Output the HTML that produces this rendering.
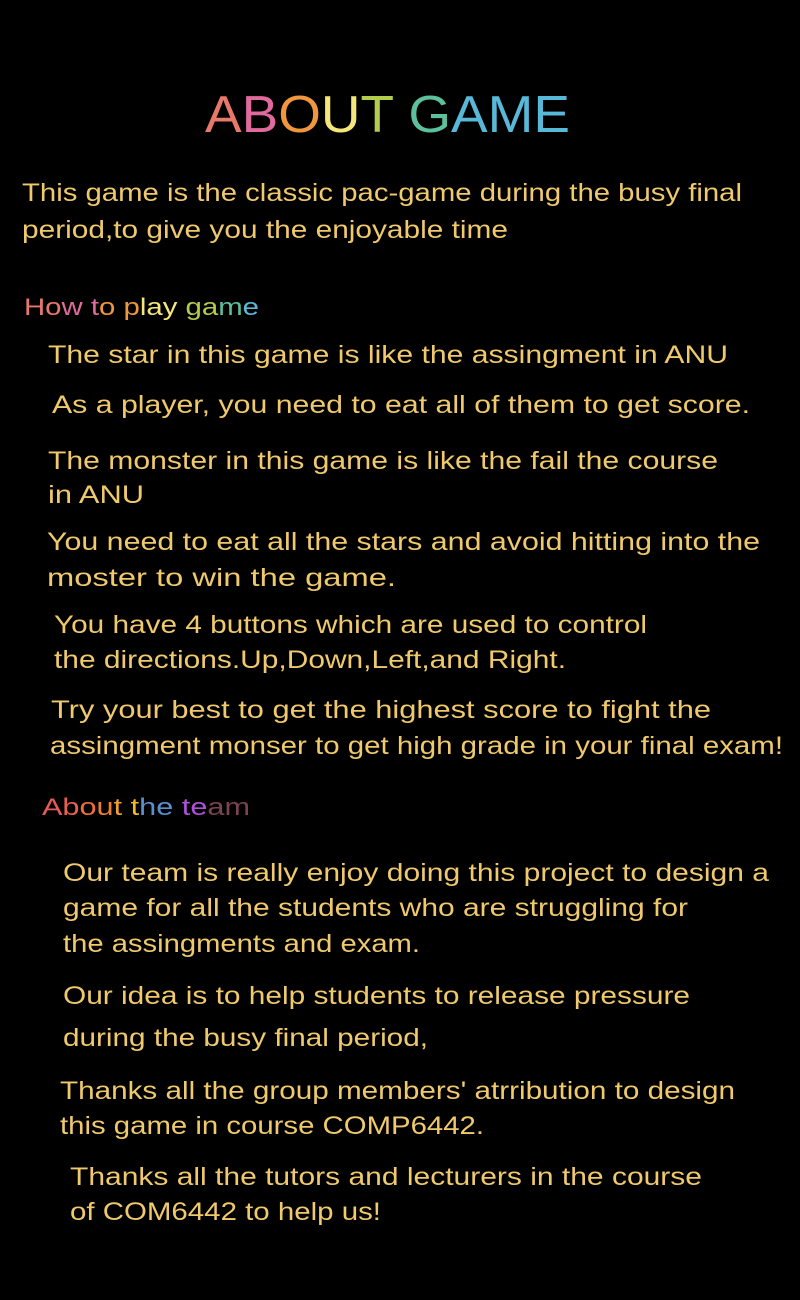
<!DOCTYPE html>
<html><head><meta charset="utf-8"><style>
html,body{margin:0;padding:0;background:#000;width:800px;height:1300px;overflow:hidden}
svg{display:block}
text{font-family:"Liberation Sans Narrow","Liberation Sans",sans-serif;}
.b{fill:#efc96c;font-size:25px}
</style></head><body>
<svg width="800" height="1300" xmlns="http://www.w3.org/2000/svg">
<rect width="800" height="1300" fill="#000"/>
<text x="205" y="132" font-size="52" textLength="365" lengthAdjust="spacingAndGlyphs"><tspan fill="#e8786c">A</tspan><tspan fill="#e06a9c">B</tspan><tspan fill="#f0963c">O</tspan><tspan fill="#f4e67a">U</tspan><tspan fill="#b4cc4c">T</tspan><tspan fill="#000"> </tspan><tspan fill="#5cc09c">G</tspan><tspan fill="#58b8d8">A</tspan><tspan fill="#58b8d8">M</tspan><tspan fill="#58b8d8">E</tspan></text>
<g class="b">
<text class="b" x="22" y="201" textLength="720" lengthAdjust="spacingAndGlyphs">This game is the classic pac-game during the busy final</text>
<text class="b" x="22" y="238" textLength="486" lengthAdjust="spacingAndGlyphs">period,to give you the enjoyable time</text>
<text class="b" x="48" y="363" textLength="680" lengthAdjust="spacingAndGlyphs">The star in this game is like the assingment in ANU</text>
<text class="b" x="52" y="413" textLength="698" lengthAdjust="spacingAndGlyphs">As a player, you need to eat all of them to get score.</text>
<text class="b" x="48" y="469" textLength="670" lengthAdjust="spacingAndGlyphs">The monster in this game is like the fail the course</text>
<text class="b" x="48" y="503" textLength="96" lengthAdjust="spacingAndGlyphs">in ANU</text>
<text class="b" x="47" y="550" textLength="713" lengthAdjust="spacingAndGlyphs">You need to eat all the stars and avoid hitting into the</text>
<text class="b" x="47" y="586" textLength="349" lengthAdjust="spacingAndGlyphs">moster to win the game.</text>
<text class="b" x="54" y="633" textLength="593" lengthAdjust="spacingAndGlyphs">You have 4 buttons which are used to control</text>
<text class="b" x="54" y="668" textLength="512" lengthAdjust="spacingAndGlyphs">the directions.Up,Down,Left,and Right.</text>
<text class="b" x="51" y="718" textLength="660" lengthAdjust="spacingAndGlyphs">Try your best to get the highest score to fight the</text>
<text class="b" x="50" y="754" textLength="733" lengthAdjust="spacingAndGlyphs">assingment monser to get high grade in your final exam!</text>
<text class="b" x="63" y="881" textLength="706" lengthAdjust="spacingAndGlyphs">Our team is really enjoy doing this project to design a</text>
<text class="b" x="63" y="916" textLength="625" lengthAdjust="spacingAndGlyphs">game for all the students who are struggling for</text>
<text class="b" x="63" y="952" textLength="357" lengthAdjust="spacingAndGlyphs">the assingments and exam.</text>
<text class="b" x="63" y="1004" textLength="627" lengthAdjust="spacingAndGlyphs">Our idea is to help students to release pressure</text>
<text class="b" x="63" y="1046" textLength="365" lengthAdjust="spacingAndGlyphs">during the busy final period,</text>
<text class="b" x="60" y="1099" textLength="675" lengthAdjust="spacingAndGlyphs">Thanks all the group members' atrribution to design</text>
<text class="b" x="60" y="1134" textLength="424" lengthAdjust="spacingAndGlyphs">this game in course COMP6442.</text>
<text class="b" x="70" y="1185" textLength="632" lengthAdjust="spacingAndGlyphs">Thanks all the tutors and lecturers in the course</text>
<text class="b" x="70" y="1220" textLength="311" lengthAdjust="spacingAndGlyphs">of COM6442 to help us!</text>
</g>
<text x="24" y="315" font-size="24" textLength="235" lengthAdjust="spacingAndGlyphs"><tspan fill="#e8786c">H</tspan><tspan fill="#e8786c">o</tspan><tspan fill="#e06a9c">w</tspan><tspan fill="#000"> </tspan><tspan fill="#e06a9c">t</tspan><tspan fill="#f0963c">o</tspan><tspan fill="#000"> </tspan><tspan fill="#f0963c">p</tspan><tspan fill="#f4e67a">l</tspan><tspan fill="#f4e67a">a</tspan><tspan fill="#f4e67a">y</tspan><tspan fill="#000"> </tspan><tspan fill="#b4cc4c">g</tspan><tspan fill="#b4cc4c">a</tspan><tspan fill="#5cc09c">m</tspan><tspan fill="#58b8d8">e</tspan></text>
<text x="42" y="815" font-size="24" textLength="208" lengthAdjust="spacingAndGlyphs"><tspan fill="#e85a5a">A</tspan><tspan fill="#e86050">b</tspan><tspan fill="#ec7038">o</tspan><tspan fill="#ee7e2e">u</tspan><tspan fill="#f0a030">t</tspan><tspan fill="#000"> </tspan><tspan fill="#f4b82c">t</tspan><tspan fill="#5890d0">h</tspan><tspan fill="#5890d0">e</tspan><tspan fill="#000"> </tspan><tspan fill="#b050d8">t</tspan><tspan fill="#b050d8">e</tspan><tspan fill="#7a4452">a</tspan><tspan fill="#7a4452">m</tspan></text>
</svg>
</body></html>
